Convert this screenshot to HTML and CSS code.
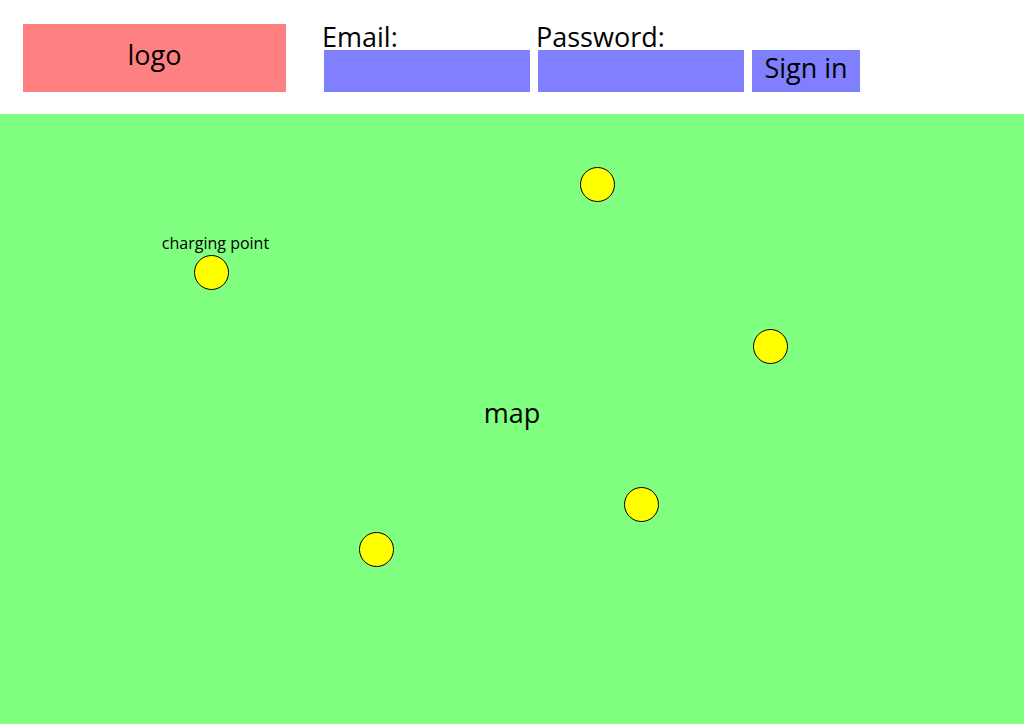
FILE: index.html
```
<!DOCTYPE html>
<html lang="en">
<head>
<meta charset="utf-8">
<meta name="viewport" content="width=device-width, initial-scale=1">
<title>Charging points</title>
<link rel="stylesheet" href="styles.css">
</head>
<body>
<header class="topbar">
  <a class="logo" href="#">logo</a>
  <form class="signin">
    <div class="field">
      <label class="label" for="email">Email:</label>
      <input class="input" id="email" type="email">
    </div>
    <div class="field">
      <label class="label" for="password">Password:</label>
      <input class="input" id="password" type="password">
    </div>
    <button class="submit" type="button">Sign in</button>
  </form>
</header>
<main class="map">
  <h1 class="map-title">map</h1>
  <button class="pin pin-a" type="button"><span class="pin-label">charging point</span></button>
  <button class="pin pin-b" type="button" aria-label="Charging point 2"></button>
  <button class="pin pin-c" type="button" aria-label="Charging point 3"></button>
  <button class="pin pin-d" type="button" aria-label="Charging point 4"></button>
  <button class="pin pin-e" type="button" aria-label="Charging point 5"></button>
</main>
</body>
</html>
```
FILE: styles.css
```
* {
  box-sizing: border-box;
}

body {
  margin: 0;
  min-height: 100vh;
  display: flex;
  flex-direction: column;
  background: #fff;
  color: #000;
  font-family: "Open Sans", sans-serif;
  font-size: 27px;
  line-height: 32px;
}

input,
button {
  font: inherit;
  color: inherit;
  border: 0;
  border-radius: 0;
}

.topbar {
  display: flex;
  align-items: flex-end;
  gap: 38px;
  padding: 24px 24px 22px 23px;
}

.logo {
  flex: 0 1 263px;
  padding: 15px 0 21px;
  background: #ff8080;
  color: inherit;
  text-align: center;
  text-decoration: none;
}

.signin {
  flex: 0 1 536px;
  display: flex;
  align-items: flex-end;
  gap: 8px;
}

.field {
  flex: 1 1 0;
  min-width: 0;
  display: flex;
  flex-direction: column;
}

.label {
  margin-left: -2px;
  line-height: 26px;
}

.input {
  width: 100%;
  height: 42px;
  padding: 0 8px;
  background: #8080ff;
}

.submit {
  flex: 0 0 108px;
  height: 42px;
  padding: 0 0 6px;
  background: #8080ff;
}

.map {
  position: relative;
  flex: 1;
  display: flex;
  align-items: center;
  justify-content: center;
  background: #80ff80;
}

.map-title {
  margin: 0;
  padding-bottom: 12px;
  font-size: 27px;
  font-weight: 400;
}

.pin {
  position: absolute;
  width: 35px;
  height: 35px;
  padding: 0;
  border: 1px solid #000;
  border-radius: 50%;
  background: #ff0;
}

.pin-label {
  position: absolute;
  bottom: 100%;
  left: 50%;
  margin-left: 4px;
  transform: translateX(-50%);
  font-size: 16px;
  line-height: 26px;
  white-space: nowrap;
}

.pin-a {
  left: 194px;
  top: 141px;
}

.pin-b {
  left: 580px;
  top: 53px;
}

.pin-c {
  left: 753px;
  top: 215px;
}

.pin-d {
  left: 624px;
  top: 373px;
}

.pin-e {
  left: 359px;
  top: 418px;
}
```
